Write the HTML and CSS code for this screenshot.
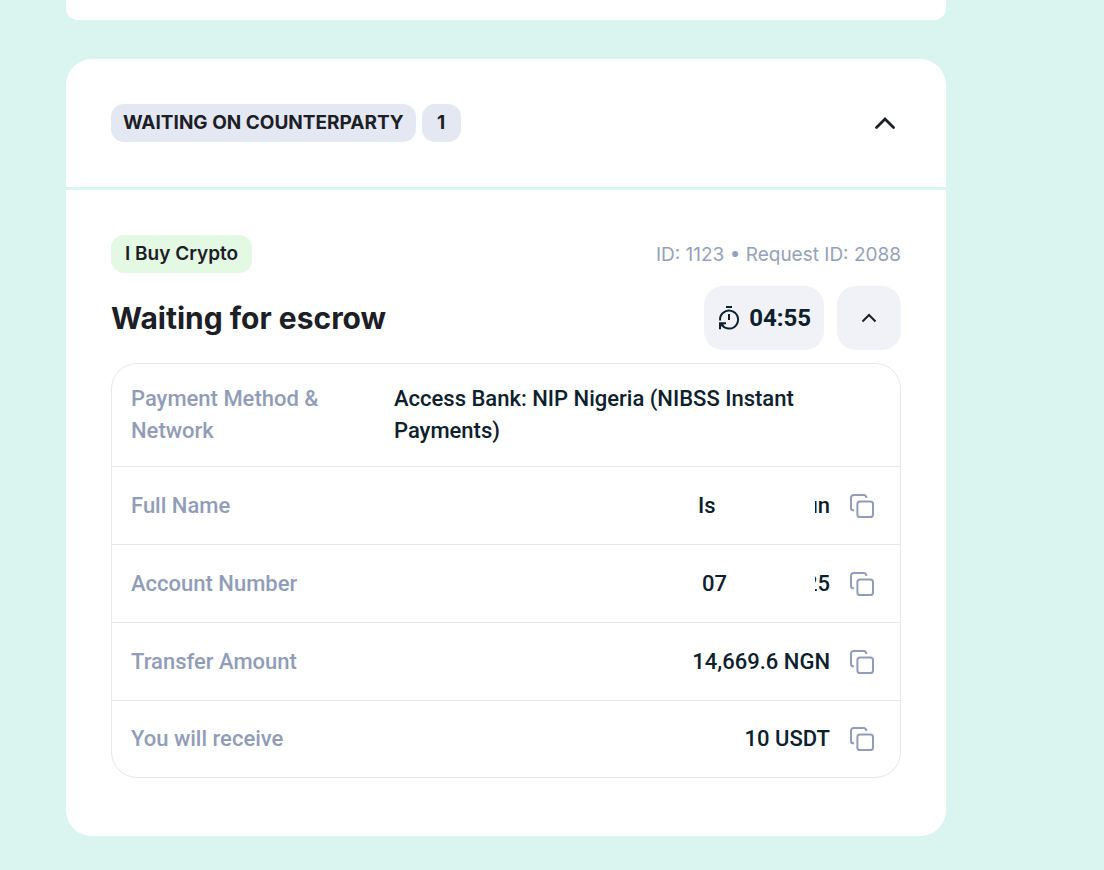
FILE: index.html
```html
<!DOCTYPE html>
<html lang="en">
<head>
    <meta charset="utf-8">
    <meta name="viewport" content="width=device-width, initial-scale=1">
    <title>Waiting on counterparty</title>
    <link rel="stylesheet" href="styles.css">
</head>

<body>
    <!-- copy icon shared by the table rows -->
    <svg class="sprite" aria-hidden="true">
        <symbol id="copy" viewBox="0 0 24 24">
            <rect x="7.4" y="7.4" width="15.6" height="15.6" rx="2.6" />
            <path d="M4 16.3H3.4A2.4 2.4 0 0 1 1 13.9V3.6A2.6 2.6 0 0 1 3.6 1H13.8A2.5 2.5 0 0 1 16.3 3.5V4" />
        </symbol>
    </svg>

    <main class="page">
        <section class="card card-previous"></section>

        <section class="card">
            <header class="card-header">
                <h2 class="badges">
                    <span class="badge badge-status">WAITING ON COUNTERPARTY</span>
                    <span class="badge badge-status badge-count">1</span>
                </h2>
                <button type="button" class="toggle" aria-label="Collapse section">
                    <svg width="32" height="32" viewBox="0 0 32 32"><path d="M7.5 20.5L16 12L24.5 20.5" stroke-width="2.8" /></svg>
                </button>
            </header>

            <div class="card-body">
                <div class="row">
                    <span class="badge badge-buy">I Buy Crypto</span>
                    <span class="ids">ID: 1123 • Request ID: 2088</span>
                </div>

                <div class="row title-row">
                    <h3 class="title">Waiting for escrow</h3>
                    <div class="actions">
                        <div class="timer">
                            <svg width="24" height="26" viewBox="0 0 24 26">
                                <path d="M9 2H15" />
                                <path d="M12 9V15" />
                                <path d="M3.1 15.5A9 9 0 1 1 5 20.2L3.4 18.6" />
                                <path d="M9 18.2H3V24.2" />
                                <path d="M3 18.2H8L3 22.5Z" fill="currentColor" stroke="none" />
                            </svg>
                            <span>04:55</span>
                        </div>
                        <button type="button" class="collapse" aria-label="Hide details">
                            <svg width="24" height="24" viewBox="0 0 24 24"><path d="M5.5 15.5L12 9L18.5 15.5" stroke-width="2" /></svg>
                        </button>
                    </div>
                </div>

                <div class="details">
                    <table>
                        <tr>
                            <th scope="row">Payment Method &amp; Network</th>
                            <td class="method">Access Bank: NIP Nigeria (NIBSS Instant Payments)</td>
                            <td class="copy-cell"></td>
                        </tr>
                        <tr>
                            <th scope="row">Full Name</th>
                            <td><span class="masked"><span>Is</span><span class="tail">un</span></span></td>
                            <td class="copy-cell"><button type="button" class="copy" aria-label="Copy full name"><svg><use href="#copy" /></svg></button></td>
                        </tr>
                        <tr>
                            <th scope="row">Account Number</th>
                            <td><span class="masked masked-number"><span>07</span><span class="tail">25</span></span></td>
                            <td class="copy-cell"><button type="button" class="copy" aria-label="Copy account number"><svg><use href="#copy" /></svg></button></td>
                        </tr>
                        <tr>
                            <th scope="row">Transfer Amount</th>
                            <td>14,669.6 NGN</td>
                            <td class="copy-cell"><button type="button" class="copy" aria-label="Copy transfer amount"><svg><use href="#copy" /></svg></button></td>
                        </tr>
                        <tr>
                            <th scope="row">You will receive</th>
                            <td>10 USDT</td>
                            <td class="copy-cell"><button type="button" class="copy" aria-label="Copy received amount"><svg><use href="#copy" /></svg></button></td>
                        </tr>
                    </table>
                </div>
            </div>
        </section>
    </main>
</body>

</html>
```

FILE: styles.css
```css
* {
    box-sizing: border-box;
}
body {
    margin: 0;
    background: #daf4ef;
    color: #1c2026;
    font-family: Inter, "Liberation Sans", sans-serif;
}
h2, h3 {
    margin: 0;
}
button {
    padding: 0;
    border: 0;
    background: none;
    color: inherit;
    cursor: pointer;
}
svg {
    display: block;
    fill: none;
    stroke: currentColor;
    stroke-width: 2;
}
.sprite {
    position: absolute;
    width: 0;
    height: 0;
}

.page {
    padding: 0 158px 34px 66px;
}
.card {
    background: #ffffff;
    border-radius: 26px;
}
.card-previous {
    height: 20px;
    margin-bottom: 39px;
    border-radius: 0 0 12px 12px;
}
.card-header {
    display: flex;
    align-items: center;
    justify-content: space-between;
    padding: 45px;
    border-bottom: 3px solid #daf4ef;
}
.card-body {
    padding: 45px 45px 58px;
}

.badges {
    display: flex;
    gap: 6px;
}
.badge {
    padding: 0 12px;
    border-radius: 13px;
    font-size: 19px;
    line-height: 38px;
    white-space: nowrap;
}
.badge-status {
    background: #e4e8f2;
    font-weight: 700;
}
.badge-count {
    min-width: 39px;
    text-align: center;
}
.badge-buy {
    padding: 0 14px;
    background: #e3f9e4;
    font-weight: 600;
}
.toggle svg {
    stroke-linecap: round;
}

.row {
    display: flex;
    align-items: center;
    justify-content: space-between;
}
.ids {
    color: #95a1bb;
    font-size: 19px;
}
.title-row {
    margin: 13px 0;
}
.title {
    font-size: 30px;
    font-weight: 700;
}
.actions {
    display: flex;
    gap: 13px;
}
.timer,
.collapse {
    display: flex;
    align-items: center;
    justify-content: center;
    height: 64px;
    border-radius: 19px;
    background: #f1f2f8;
}
.timer {
    gap: 8px;
    padding: 0 13px;
    color: #0d202d;
    font-family: Roboto, "Liberation Sans", sans-serif;
    font-size: 24px;
    font-weight: 700;
}
.collapse {
    width: 64px;
}

.details {
    border: 1px solid #e4e8f2;
    border-radius: 26px;
    font-family: Roboto, "Liberation Sans", sans-serif;
}
table {
    width: 100%;
    border-spacing: 0;
}
th,
td {
    height: 78px;
    padding: 19px 0;
    border-bottom: 1px solid #e4e8f2;
    font-size: 22px;
    line-height: 32px;
    font-weight: 500;
}
tr:last-child > * {
    height: 76px;
    border-bottom: 0;
}
th {
    width: 282px;
    padding: 19px 50px 19px 19px;
    color: #919db8;
    text-align: left;
}
td {
    color: #0d202d;
    text-align: right;
}
.method {
    text-align: left;
}
.copy-cell {
    width: 70px;
    padding: 0 26px 0 20px;
}
.copy,
.copy svg {
    display: block;
    width: 24px;
    height: 24px;
    color: #919db8;
}

/* middle of the value is hidden, only both ends stay readable */
.masked {
    display: flex;
    justify-content: space-between;
    width: 132px;
    margin-left: auto;
}
.masked-number {
    width: 128px;
}
.tail {
    display: flex;
    justify-content: flex-end;
    width: 15px;
    overflow: hidden;
}
```
